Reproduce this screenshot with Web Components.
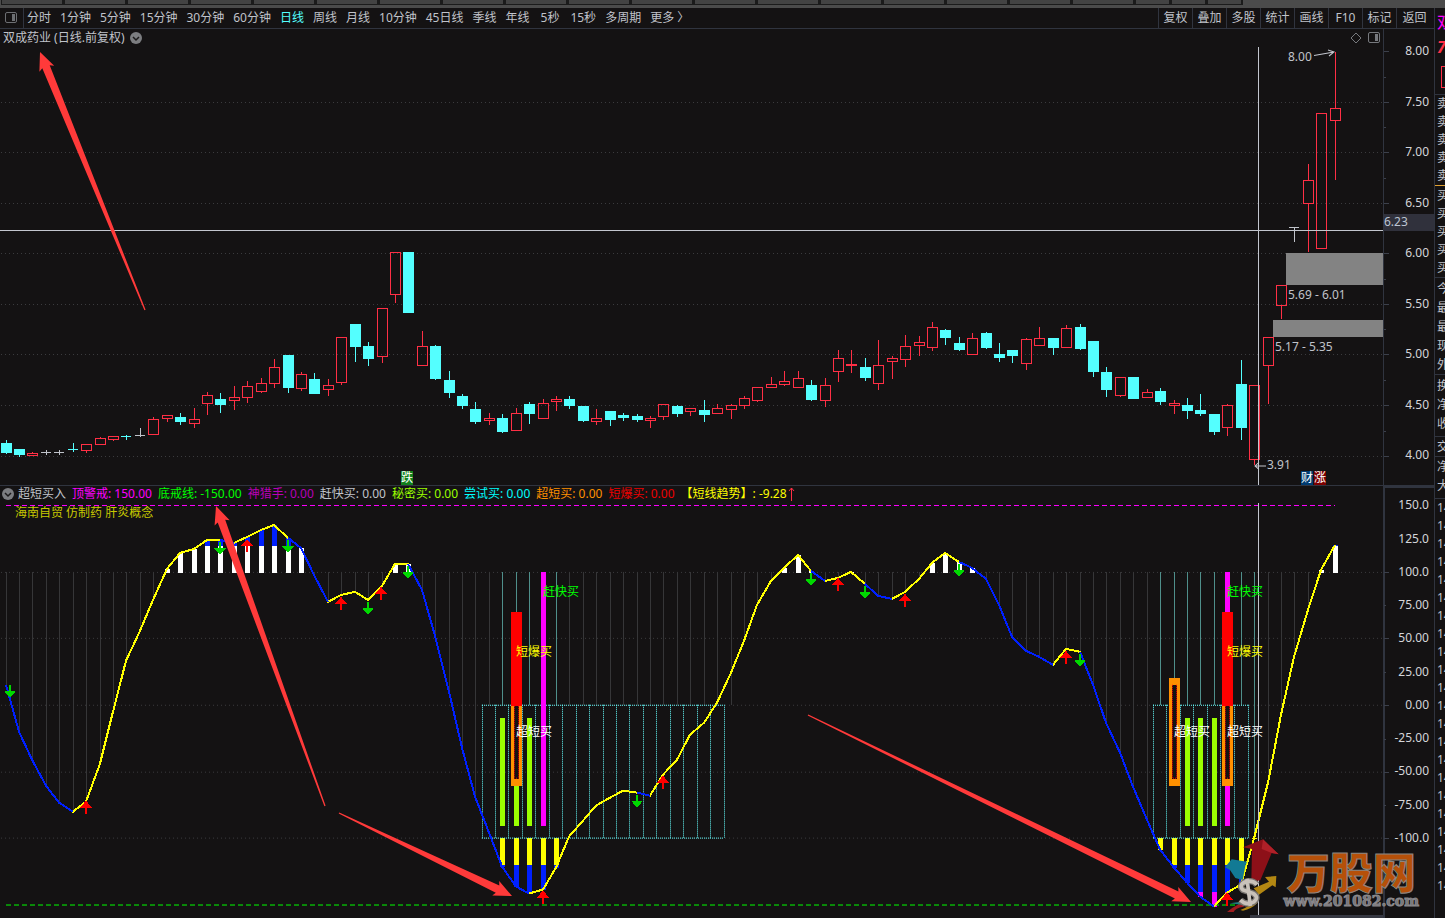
<!DOCTYPE html>
<html lang="zh-CN">
<head>
<meta charset="utf-8">
<title>双成药业 日线</title>
<style>
    body { margin: 0; background: #141213; }
</style>
</head>
<body>
<stock-app></stock-app>
<script>
const PLOT_W = 1384;
const STEP = 13.425;
const cx = i => Math.floor(i * STEP + 6.1);
const rect = (x, y, w, h, fill) => `<rect x="${x}" y="${y}" width="${w}" height="${h}" fill="${fill}"/>`;
const dots = y => `<path d="M1 ${y + 0.5}H1383" stroke="#3b3b3e" stroke-dasharray="1 3"/>`;

// kind, high, low, body top, body bottom  (r: up, c: down, g/k: flat)
const CANDLES = [
    ['c',440,454,443,453], ['c',449,457,449,455], ['r',452,456,453,456], ['g',450,455,452,453], ['g',450,455,452,453],
    ['k',443,452,449,450], ['r',444,453,444,451], ['r',437,445,438,445], ['r',436,441,436,440], ['k',435,440,436,437],
    ['g',428,437,435,436], ['r',417,435,419,435], ['r',415,422,415,419], ['c',413,425,417,422], ['r',408,428,419,424],
    ['r',392,415,395,404], ['c',393,413,399,405], ['r',386,410,397,401], ['r',381,403,386,398], ['r',378,393,383,392],
    ['r',359,388,367,384], ['c',355,393,355,388], ['r',372,391,374,389], ['c',373,394,379,394], ['r',379,396,385,390],
    ['r',337,385,337,383], ['c',324,362,324,347], ['c',342,366,346,359], ['r',308,363,308,357], ['r',252,303,252,295],
    ['c',252,313,252,313], ['r',331,366,346,366], ['c',345,380,346,379], ['c',371,398,380,393], ['c',394,409,396,406],
    ['c',402,424,409,422], ['r',413,425,418,421], ['c',414,433,418,432], ['r',408,431,413,431], ['c',402,424,404,414],
    ['r',399,419,403,419], ['r',396,411,399,402], ['c',396,409,399,406], ['c',406,422,406,421], ['r',409,425,418,422],
    ['c',411,426,411,420], ['c',413,421,415,418], ['c',414,422,416,420], ['r',416,428,418,421], ['r',404,420,404,417],
    ['c',405,417,406,414], ['r',408,416,408,412], ['c',400,422,410,415], ['r',404,414,408,414], ['r',404,419,405,410],
    ['r',396,409,398,406], ['r',387,402,387,401], ['r',377,388,384,388], ['r',371,386,381,385], ['r',371,388,378,388],
    ['c',380,401,385,400], ['r',378,407,385,401], ['r',350,382,358,372], ['r',350,373,364,366], ['c',358,381,367,378],
    ['r',340,390,365,384], ['r',356,379,358,362], ['r',335,367,346,360], ['r',336,356,342,346], ['r',322,351,327,348],
    ['c',329,345,330,338], ['c',337,351,343,350], ['r',333,355,338,355], ['c',332,349,333,348], ['c',343,362,354,358],
    ['c',350,363,350,356], ['r',338,370,339,364], ['r',327,346,338,346], ['c',338,355,338,348], ['r',325,348,328,348],
    ['c',324,350,327,349], ['c',341,377,341,372], ['c',367,397,372,390], ['r',377,397,377,396], ['c',377,399,377,399],
    ['r',389,398,392,398], ['c',388,405,391,402], ['r',400,414,403,406], ['c',398,419,405,411], ['c',394,416,410,414],
    ['c',414,435,414,432], ['r',404,436,405,428], ['c',360,440,384,428], ['r',385,465,385,460], ['r',337,404,337,366],
    ['r',285,319,285,306], ['g',228,242,227,228], ['r',164,252,180,204], ['r',113,249,113,249], ['r',52,180,108,121]
];

// y of the trend line for every bar
const TREND = [
    685,732,760,786,803,812,802,764,712,661,631,600,569,553,549,540,540,543,537,530,525,538,548,575,602,
    595,592,600,586,564,564,590,636,692,748,797,833,867,887,894,890,868,837,821,806,798,791,793,796,775,
    760,735,723,703,673,641,605,581,568,555,571,581,578,572,584,596,599,592,579,563,553,562,568,579,605,
    637,651,657,665,649,652,685,723,753,787,820,850,868,883,897,907,893,885,839,783,715,657,610,570,545
];
const FALLING = [[0,5], [16,17], [21,24], [30,39], [47,48], [60,61], [64,66], [71,78], [80,90]];

function candleSvg([kind, high, low, top, bottom], i) {
    const x = cx(i);
    if (kind === 'g' || kind === 'k') {
        const color = kind === 'g' ? '#c0c3ca' : '#54ffff';
        return rect(x - 5, top, 10, 1, color) + rect(x, high, 1, low - high, color);
    }
    if (kind === 'c') {
        return rect(x, high, 1, low - high, '#54ffff') + rect(x - 5, top, 11, bottom - top, '#54ffff');
    }
    return rect(x, high, 1, Math.max(top - high, 0), '#ff2f45') + rect(x, bottom, 1, Math.max(low - bottom, 0), '#ff2f45')
        + `<rect x="${x - 4.5}" y="${top + 0.5}" width="10" height="${bottom - top - 1}" fill="none" stroke="#ff2f45"/>`;
}

function define(name, html) {
    customElements.define(name, class extends HTMLElement {
        constructor() {
            super();
            this.attachShadow({ mode: 'open' });
        }
        connectedCallback() {
            this.shadowRoot.innerHTML = typeof html === 'function' ? html(this) : html;
        }
    });
}

// Round toggle with a chevron in front of a pane title
define('fold-button', `
    <style>
        :host { display: block; }
        button { display: block; padding: 0; border: 0; background: none; cursor: pointer; }
        svg { display: block; }
    </style>
    <button aria-label="展开"><svg width="12" height="12" viewBox="0 0 12 12"><circle cx="6" cy="6" r="6" fill="#7c7d80"/><path d="M3 5l3 3 3-3" fill="none" stroke="#1c1a1b" stroke-width="1.5"/></svg></button>
`);

define('chart-label', el => {
    const top = (el.getAttribute('y') - el.getAttribute('from')) / el.getAttribute('span') * 100;
    return `
    <style>
        :host { position: absolute; left: ${el.getAttribute('x') / PLOT_W * 100}%; top: ${top}%; font-size: 12px; line-height: 14px; height: 14px; margin-top: -6px; white-space: nowrap; color: ${el.getAttribute('color') || '#c0c3ca'}; background: ${el.getAttribute('bg') || 'none'}; }
    </style>
    <slot></slot>`;
});

define('tab-strip', `
    <style>
        :host { display: flex; height: 8px; padding-left: 1px; background: #4b4b4b; overflow: hidden; }
        i { flex: none; box-sizing: border-box; width: 63px; height: 5px; border: 1px solid #1b1b1b; border-width: 0 2px 1px 1px; background: #434343; }
        i.small { width: 36px; }
    </style>
    ${'<i></i>'.repeat(18)}${'<i class="small"></i>'.repeat(3)}
`);

const PERIODS = ['分时', '1分钟', '5分钟', '15分钟', '30分钟', '60分钟', '日线', '周线', '月线', '10分钟', '45日线', '季线', '年线', '5秒', '15秒', '多周期', '更多 〉'];
const TOOLS = ['复权', '叠加', '多股', '统计', '画线', 'F10', '标记', '返回'];

define('period-bar', `
    <style>
        :host { display: flex; height: 20px; border-bottom: 1px solid #30343f; }
        button { padding: 0; border: 0; background: none; color: #c0c3ca; font: inherit; line-height: 18px; white-space: nowrap; cursor: pointer; }
        .layout { width: 24px; box-sizing: border-box; border-right: 1px solid #30343f; padding-left: 5px; }
        svg { display: block; }
        nav { display: flex; gap: 9px; flex: 1; padding-left: 3px; }
        nav .sec { padding-left: 2px; }
        nav .on { color: #54ffff; }
        .tools { display: flex; }
        .tools button { box-sizing: border-box; width: 34px; border-left: 1px solid #30343f; }
        .tools button:last-child { width: 38px; padding-right: 2px; }
    </style>
    <button class="layout" aria-label="布局"><svg width="12" height="12" viewBox="0 0 12 12"><rect x=".5" y=".5" width="11" height="10" rx="1.5" fill="none" stroke="#6d6f73"/><path d="M7 2h3v7H7z" fill="#6d6f73"/></svg></button>
    <nav>${PERIODS.map(p => `<button class="${p === '日线' ? 'on' : ''}${p.endsWith('秒') ? 'sec' : ''}">${p}</button>`).join('')}</nav>
    <div class="tools">${TOOLS.map(t => `<button>${t}</button>`).join('')}</div>
`);

// Scale on the right of a pane: labels spread evenly from the first to the last one
define('value-axis', el => {
    const from = +el.getAttribute('from');
    const span = +el.getAttribute('span');
    const line = +(el.getAttribute('line') || 1);
    const ticks = el.getAttribute('ticks').split(' ').map(Number);
    let svg = '';
    ticks.forEach((y, i) => {
        svg += rect(0, y, 5, 1, '#3c404b');
        if (i) svg += rect(0, Math.round((y + ticks[i - 1]) / 2), 2, 1, '#3c404b');
    });
    return `
    <style>
        :host { display: flex; flex: none; width: 50px; position: relative; }
        svg { position: absolute; inset: 0; width: 100%; height: 100%; }
        ol { display: flex; flex-direction: column; justify-content: space-between; flex: 1; margin: 0; padding: ${el.getAttribute('pad')}; list-style: none; text-align: right; line-height: 20px; color: #d4d6da; }
        .now { position: absolute; left: 0; right: 0; top: 185px; height: 17px; line-height: 15px; background: #30313c; color: #bcc4d2; }
        .edge { position: absolute; left: -1px; right: 0; top: 0; bottom: 0; border-left: ${line}px solid #30343f; ${line > 1 ? 'border-top: 2px solid #30343f;' : ''} }
    </style>
    <div class="edge"></div>
    <svg viewBox="0 ${from} 50 ${span}" preserveAspectRatio="none" shape-rendering="crispEdges">${svg}</svg>
    <ol>${el.getAttribute('values').split(' ').map(v => `<li>${v}</li>`).join('')}</ol>
    ${el.hasAttribute('now') ? `<div class="now">${el.getAttribute('now')}</div>` : ''}`;
});

const label1 = (x, y, text, extra = '') => `<chart-label x="${x}" y="${y}" from="47" span="438" ${extra}>${text}</chart-label>`;
const label2 = (x, y, text, color) => `<chart-label x="${x}" y="${y}" from="503" span="415" color="${color}">${text}</chart-label>`;

define('candle-pane', `
    <style>
        :host { display: flex; flex: 457 1 0; min-height: 0; box-sizing: border-box; border-bottom: 1px solid #30343f; }
        .main { display: flex; flex-direction: column; flex: 1; min-width: 0; }
        header { display: flex; align-items: center; gap: 5px; height: 18px; line-height: 18px; padding-left: 3px; padding-right: 4px; }
        header .icons { display: flex; gap: 6px; margin-left: auto; }
        .plot { position: relative; flex: 1; min-height: 0; }
        .plot > svg { position: absolute; inset: 0; width: 100%; height: 100%; }
    </style>
    <div class="main">
        <header>
            <span>双成药业 (日线.前复权)</span>
            <fold-button></fold-button>
            <span class="icons">
                <svg width="12" height="12" viewBox="0 0 12 12"><path d="M6 1l5 5-5 5-5-5z" fill="none" stroke="#77797e"/></svg>
                <svg width="12" height="12" viewBox="0 0 12 12"><rect x=".5" y=".5" width="11" height="10" rx="1.5" fill="none" stroke="#77797e"/><path d="M7 2h3v7H7z" fill="#77797e"/></svg>
            </span>
        </header>
        <div class="plot">
            <svg viewBox="0 47 ${PLOT_W} 438" preserveAspectRatio="none" shape-rendering="crispEdges">
                ${[102, 152, 203, 253, 304, 354, 405, 456].map(dots).join('')}
                ${rect(1286, 253, 97, 32, '#838383')}${rect(1273, 320, 110, 17, '#838383')}
                ${CANDLES.map(candleSvg).join('')}
                ${rect(0, 230, 1383, 1, '#c3c6ce')}${rect(1258, 47, 1, 438, '#c3c6ce')}
                <g fill="none" stroke="#c3c6ce" shape-rendering="auto">
                    <path d="M1314 55.5L1334 52M1328 50l6 2-5 4"/>
                    <path d="M1266 465.500H1255M1259 462l-4 3.500 4 3.500"/>
                </g>
            </svg>
            ${label1(1288, 56, '8.00')}
            ${label1(1288, 294, '5.69 - 6.01')}
            ${label1(1275, 346, '5.17 - 5.35')}
            ${label1(1267, 464, '3.91')}
            ${label1(401, 477, '跌', 'color="#fff" bg="#12801c"')}
            ${label1(1301, 477, '财', 'color="#fff" bg="#003b70"')}
            ${label1(1314, 477, '涨', 'color="#fff" bg="#7c0000"')}
        </div>
    </div>
    <value-axis from="29" span="456" pad="12px 5px 20px 0" now="6.23" ticks="51 102 152 203 253 304 354 405 456"
        values="8.00 7.50 7.00 6.50 6.00 5.50 5.00 4.50 4.00"></value-axis>
`);

function trendSvg() {
    let s = [572, 638, 705, 772, 838].map(dots).join('');
    TREND.forEach((y, i) => {
        const x = cx(i);
        const first = i >= 36 && i <= 54;
        const second = i >= 86 && i <= 92;
        const hot = (i >= 37 && i <= 41) || (i >= 86 && i <= 93);
        if (y > 573) s += rect(x, 572, 1, (first || second ? 705 : Math.min(y, 838)) - 572, hot ? '#4f8f8b' : '#363638');
        if (y < 573) {
            s += rect(x - 2, Math.max(y, 546), 5, 573 - Math.max(y, 546), '#fff');
            if (y < 546) s += rect(x - 2, y, 5, 546 - y, '#0020ff');
        }
        if (hot) {
            s += rect(x - 2, 838, 5, Math.min(y, 865) - 838, '#ff0');
            if (y > 865) s += rect(x - 2, 865, 5, Math.min(y, 892) - 865, '#0020ff');
            if (y > 892) s += rect(x - 2, 892, 5, y - 892, '#f0f');
        }
    });
    // dotted boxes between 0 and -100
    [[482, 18], [1153, 7]].forEach(([left, n]) => {
        const right = Math.round(left + n * (n > 7 ? STEP : 13.6));
        let d = `M${left} 705.5H${right}M${left} 838.5H${right}`;
        for (let k = 0; k <= n; k++) d += `M${Math.floor(left + k * (right - left) / n) + 0.5} 705V838`;
        s += `<path d="${d}" stroke="#6ff" stroke-dasharray="1 1"/>`;
    });
    const frame = (x, y) => rect(x - 5, y, 11, 786 - y, '#ff9000') + rect(x - 2, y === 678 ? 685 : y, 5, 779 - (y === 678 ? 685 : y), '#141213')
        + `<path d="M${x - 1.5} ${y === 678 ? 685 : y}V778.500H${x + 2.5}V${y === 678 ? 685 : y}" fill="none" stroke="#f00" stroke-dasharray="1 1"/>`;
    [37, 38, 39, 88, 89, 90].forEach(i => { s += rect(cx(i) - 2, 718, 5, 108, '#9bff00'); });
    [40, 91].forEach(i => { s += rect(cx(i) - 2, 572, 5, 254, '#f0f'); });
    [38, 91].forEach(i => { s += frame(cx(i), 706) + rect(cx(i) - 5, 612, 11, 94, '#f00'); });
    s += frame(cx(87), 678);

    s += '<path d="M6 505.500H1335" stroke="#f0f" stroke-dasharray="5 3"/><path d="M6 905.500H1250" stroke="#0f0" stroke-dasharray="5 3"/>';
    const pts = (a, b) => TREND.slice(a, b + 1).map((y, k) => `${cx(a + k)},${y}`).join(' ');
    s += `<polyline points="${pts(0, 99)}" fill="none" stroke="#ff0" stroke-width="2"/>`;
    FALLING.forEach(([a, b]) => { s += `<polyline points="${pts(a, b)}" fill="none" stroke="#0020ff" stroke-width="2"/>`; });

    [[86,801], [247,539], [341,597], [381,587], [543,891], [663,776], [838,578], [905,594], [1066,651], [1227,893]].forEach(([x, y]) => {
        s += `<path d="M${x} ${y}l6 7h-5v6h-2v-6h-5z" fill="#f00"/>`;
    });
    [[10,685], [220,542], [288,540], [368,602], [408,566], [637,795], [811,573], [865,586], [959,564], [1080,654]].forEach(([x, y]) => {
        s += `<path d="M${x - 1} ${y}h2v6h5l-6 7-6-7h5z" fill="#00d800"/>`;
    });
    return s + rect(1258, 503, 1, 415, '#c3c6ce') + rect(1250, 915, 134, 3, '#363842');
}

const LEGEND = [
    ['顶警戒: 150.00', '#ff00ff'], ['底戒线: -150.00', '#00ff00'], ['神猎手: 0.00', '#b800b8'], ['赶快买: 0.00', '#c0c3ca'], ['秘密买: 0.00', '#9bff00'],
    ['尝试买: 0.00', '#00ffff'], ['超短买: 0.00', '#ff9000'], ['短爆买: 0.00', '#ee0000'], ['【短线趋势】: -9.28', '#ffff00']
];

define('trend-pane', `
    <style>
        :host { display: flex; flex: 432 1 0; min-height: 0; }
        .main { display: flex; flex-direction: column; flex: 1; min-width: 0; }
        header { display: flex; box-sizing: border-box; align-items: center; gap: 6px; height: 17px; line-height: 15px; padding: 0 0 2px 2px; white-space: nowrap; }
        header fold-button { margin-right: -2px; }
        .up { margin-left: -5px; }
        .plot { position: relative; flex: 1; min-height: 0; }
        .plot > svg { position: absolute; inset: 0; width: 100%; height: 100%; }
    </style>
    <div class="main">
        <header>
            <fold-button></fold-button>
            <span>超短买入</span>
            ${LEGEND.map(([text, color]) => `<span style="color: ${color}">${text}</span>`).join('')}
            <svg class="up" width="7" height="14" viewBox="0 0 7 14"><path d="M3.500 1v13M1 4l2.500-3L6 4" fill="none" stroke="#ff2f45"/></svg>
        </header>
        <div class="plot">
            <svg viewBox="0 503 ${PLOT_W} 415" preserveAspectRatio="none" shape-rendering="crispEdges">${trendSvg()}</svg>
            ${label2(15, 512, '海南自贸 仿制药 肝炎概念', '#c8c800')}
            ${label2(543, 591, '赶快买', '#00ff00')}
            ${label2(516, 651, '短爆买', '#ffff00')}
            ${label2(516, 731, '超短买', '#ffffff')}
            ${label2(1227, 591, '赶快买', '#00ff00')}
            ${label2(1227, 651, '短爆买', '#ffff00')}
            ${label2(1174, 731, '超短买', '#ffffff')}
            ${label2(1227, 731, '超短买', '#ffffff')}
        </div>
    </div>
    <value-axis from="486" span="432" pad="9px 5px 70px 0" line="2" ticks="572 638 705 772 838"
        values="150.0 125.0 100.0 75.00 50.00 25.00 0.00 -25.00 -50.00 -75.00 -100.0"></value-axis>
`);

const rows = text => [...text].map(c => `<div>${c}</div>`).join('');

define('quote-strip', `
    <style>
        :host { display: block; flex: none; width: 11px; box-sizing: border-box; border-left: 1px solid #30343f; overflow: hidden; white-space: nowrap; }
        section { padding-left: 2px; border-bottom: 1px solid #30343f; line-height: 18px; }
        section.wide { line-height: 19px; }
        .name { font-size: 16px; line-height: 28px; color: #f0f; }
        .price { font-size: 16px; font-weight: bold; font-style: italic; line-height: 22px; color: #ff2f45; }
        .box { box-sizing: border-box; width: 20px; height: 22px; margin: 8px 0 6px 4px; border: 1px solid #ff2f45; }
        section.sell { border-color: #e0a030; }
        .pad { padding-top: 1px; }
        .end { padding-bottom: 3px; }
        section:last-child { border-bottom: 0; }
    </style>
    <section><div class="name">双成</div><div class="price">7.44</div><div class="box"></div></section>
    <section class="sell">${rows('卖卖卖卖卖')}</section>
    <section class="pad">${rows('买买买买买')}</section>
    <section class="wide pad">${rows('今最最现外')}</section>
    <section class="wide pad end">${rows('换净收')}</section>
    <section class="wide">${rows('交')}</section>
    <section class="wide end">${rows('净大')}</section>
    <section>${'<div>14</div>'.repeat(22)}</section>
`);

// Thin tapered arrows over both panes
function pointer([x0, y0, x1, y1]) {
    const len = Math.hypot(x1 - x0, y1 - y0);
    const ux = (x1 - x0) / len, uy = (y1 - y0) / len;
    const at = (back, side) => `${(x1 - ux * back - uy * side).toFixed(1)},${(y1 - uy * back + ux * side).toFixed(1)}`;
    return `<polygon points="${at(len, 0.6)} ${at(16, 4)} ${at(18, 8)} ${x1},${y1} ${at(18, -8)} ${at(16, -4)} ${at(len, -0.6)}"/>`;
}

define('pointer-layer', `
    <style>
        :host { position: absolute; inset: 0; pointer-events: none; }
        svg { width: 100%; height: 100%; }
    </style>
    <svg viewBox="0 0 1445 918" preserveAspectRatio="none" fill="#ff3a3a">
        ${[[145,310,40,52], [325,806,216,506], [339,813,512,896], [808,715,1191,902]].map(pointer).join('')}
    </svg>
`);

define('site-mark', `
    <style>
        :host { position: absolute; right: 26px; bottom: 5px; display: flex; align-items: flex-end; gap: 4px; pointer-events: none; }
        .text { padding-bottom: 4px; text-align: center; }
        .name { font: 900 43px/46px "Noto Sans CJK SC", sans-serif; color: #b65009; -webkit-text-stroke: 1px #8b8782; }
        .url { font: bold 14px/16px "DejaVu Serif", serif; color: #77757a; -webkit-text-stroke: 1px #8a888b; }
        svg { display: block; }
    </style>
    <svg width="54" height="75" viewBox="286 834 162 225">
        <path d="M340 862l60-24 47 45-21-4-34 82-27 4 2-98z" fill="#8d1018"/>
        <path d="M400 838l47 45-21-4-30-12z" fill="#b02028"/>
        <path d="M286 922l20-24 46 7-5 12-8 43-22-6-16-24z" fill="#127a94"/>
        <path d="M372 985l46-20-12-14 34-3-2 34-10-6-40 28z" fill="#b38712"/>
        <path d="M292 1056q30-26 60-30l-10 14q-26 4-30 16z" fill="#a01c1e"/>
        <path d="M332 1050q26-8 40-30l12 8q-18 18-44 24z" fill="#b38712"/>
        <path d="M300 1030q24 0 48-10l-12 14z" fill="#1e7f84"/>
        <path d="M382 974q-14-16-36-8-20 10-6 24l30 10q20 12 2 26-22 12-40-6" fill="none" stroke="#77736f" stroke-width="19"/>
        <path d="M382 974q-14-16-36-8-20 10-6 24l30 10q20 12 2 26-22 12-40-6M352 956l10 82" fill="none" stroke="#c9c2ba" stroke-width="11"/>
    </svg>
    <div class="text"><div class="name">万股网</div><div class="url">www.201082.com</div></div>
`);

define('stock-app', `
    <style>
        :host { position: relative; display: flex; flex-direction: column; min-height: 100vh; overflow: hidden; background: #141213; color: #c0c3ca; font: 12px/18px "Noto Sans", "Noto Sans CJK SC", sans-serif; }
        .body { display: flex; flex: 1; }
        main { display: flex; flex-direction: column; flex: 1; min-width: 0; }
    </style>
    <tab-strip></tab-strip>
    <div class="body">
        <main>
            <period-bar></period-bar>
            <candle-pane></candle-pane>
            <trend-pane></trend-pane>
        </main>
        <quote-strip></quote-strip>
    </div>
    <pointer-layer></pointer-layer>
    <site-mark></site-mark>
`);
</script>
</body>
</html>
